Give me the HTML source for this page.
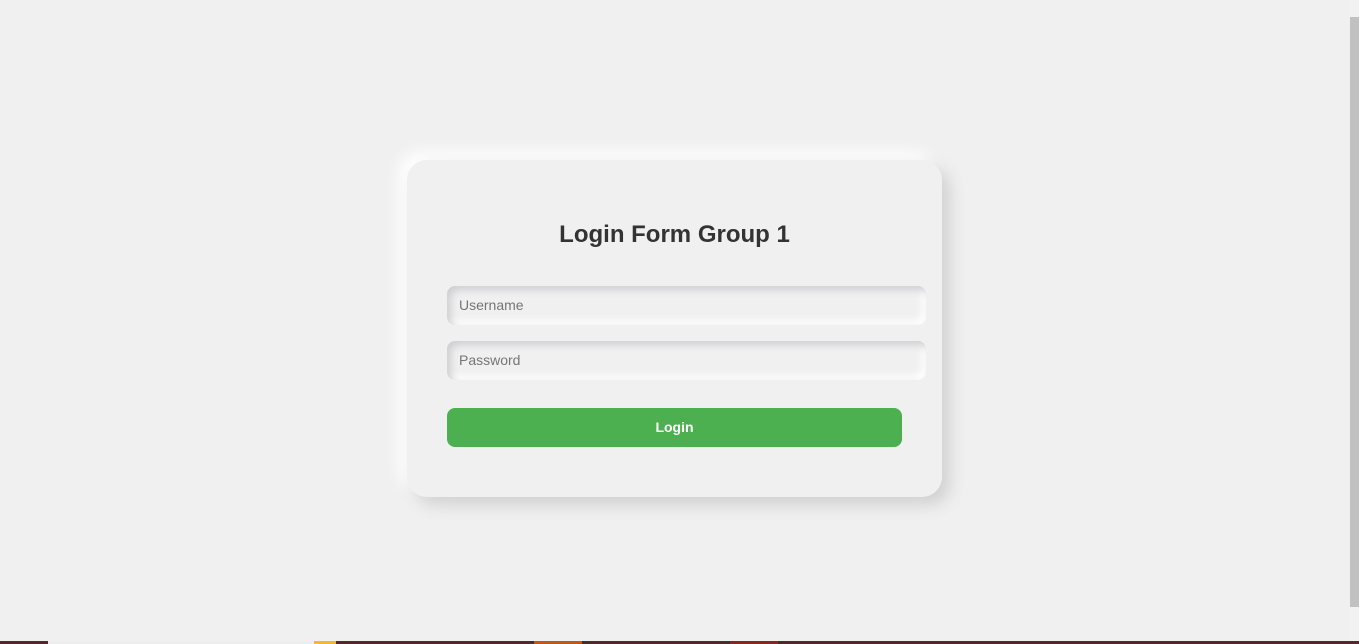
<!DOCTYPE html>
<html><head><style>
html,body{margin:0;height:644px;overflow:hidden;background:#f0f0f0;font-family:"Liberation Sans",sans-serif;}
.card{position:absolute;left:407px;top:160px;width:455px;height:337px;padding:0 40px;background:#f0f0f0;border-radius:20px;box-shadow:8px 8px 16px #d1d1d1,-8px -8px 16px #ffffff;}
h2{margin:0;position:absolute;left:0;right:0;text-align:center;font-size:24px;color:#333;font-weight:bold;}
.in{position:absolute;left:40px;width:455px;height:39px;padding:0 12px;border-radius:8px;background:#f0f0f0;box-shadow:inset 4px 4px 8px #cfcfd3,inset -4px -4px 8px #ffffff;font-size:14px;color:#757575;line-height:39px;}
.btn{position:absolute;left:40px;top:248px;width:455px;height:39px;border-radius:8px;background:#4caf50;color:#fff;font-weight:bold;font-size:14px;text-align:center;line-height:39px;}
.sb{position:absolute;right:0;top:0;width:9px;height:641px;background:#f1f1f1;}
.th{position:absolute;right:0;top:17px;width:9px;height:590px;background:#c1c1c1;}
.bar{position:absolute;left:0;bottom:0;width:1359px;height:3px;background:#4f2a2a;}
</style></head><body>
<div class="card">
<h2 style="top:61px">Login Form Group 1</h2>
<div class="in" style="top:126px">Username</div>
<div class="in" style="top:181px">Password</div>
<div class="btn">Login</div>
</div>
<div class="sb"></div><div class="th"></div>
<div class="bar"><div style="position:absolute;left:48px;width:266px;height:3px;background:#eee"></div><div style="position:absolute;left:314px;width:22px;height:3px;background:#f5b82e"></div><div style="position:absolute;left:534px;width:48px;height:3px;background:#c9541a"></div><div style="position:absolute;left:730px;width:48px;height:3px;background:#8a2424"></div></div>
</body></html>
